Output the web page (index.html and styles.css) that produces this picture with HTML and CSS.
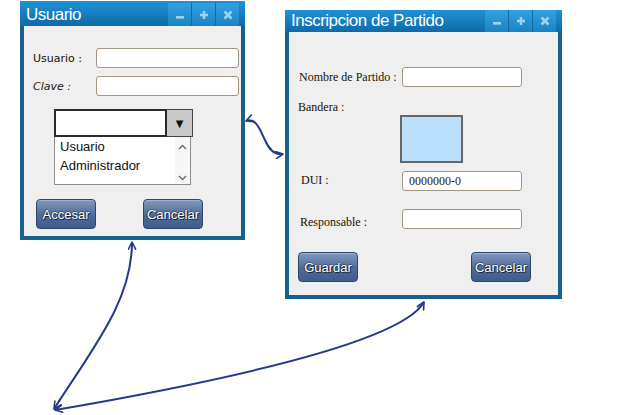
FILE: index.html
```html
<!DOCTYPE html>
<html lang="es">
<head>
<meta charset="utf-8">
<title>Usuario / Inscripcion de Partido</title>
<link rel="stylesheet" href="styles.css">
</head>
<body>
<div class="desk">

  <section class="win win-login">
    <header class="tbar tbar-tall">
      <span class="ttl">Usuario</span>
      <div class="tbtns">
        <span class="tb"><svg width="10" height="10" viewBox="0 0 10 10"><rect x="1" y="6" width="8" height="2.6" fill="#9fd0ee"/></svg></span>
        <span class="tb"><svg width="10" height="10" viewBox="0 0 10 10"><rect x="3.7" y="1" width="2.6" height="8" fill="#9fd0ee"/><rect x="1" y="3.7" width="8" height="2.6" fill="#9fd0ee"/></svg></span>
        <span class="tb"><svg width="10" height="10" viewBox="0 0 10 10"><path d="M1.5 1.5 L8.5 8.5 M8.5 1.5 L1.5 8.5" stroke="#9fd0ee" stroke-width="2.6"/></svg></span>
      </div>
    </header>
    <div class="wbody login-body">
      <div class="frow">
        <span class="lbl-c">Usuario :</span>
        <span class="inp inp-login"></span>
      </div>
      <div class="frow frow-2">
        <span class="lbl-c lbl-clave">Clave :</span>
        <span class="inp inp-login"></span>
      </div>
      <div class="combo">
        <div class="cb-head">
          <span class="cb-text"></span>
          <span class="cb-btn">&#9660;</span>
        </div>
        <div class="cb-list">
          <div class="cb-items">
            <div class="cb-item">Usuario</div>
            <div class="cb-item">Administrador</div>
          </div>
          <div class="cb-scroll">
            <svg width="9" height="6" viewBox="0 0 9 6"><path d="M1 5 L4.5 1.5 L8 5" fill="none" stroke="#666" stroke-width="1.3"/></svg>
            <svg width="9" height="6" viewBox="0 0 9 6"><path d="M1 1 L4.5 4.5 L8 1" fill="none" stroke="#666" stroke-width="1.3"/></svg>
          </div>
        </div>
      </div>
      <div class="brow brow-login">
        <span class="btn">Accesar</span>
        <span class="btn btn-cancel1">Cancelar</span>
      </div>
    </div>
  </section>

  <section class="win win-party">
    <header class="tbar">
      <span class="ttl">Inscripcion de Partido</span>
      <div class="tbtns">
        <span class="tb"><svg width="10" height="10" viewBox="0 0 10 10"><rect x="1" y="6" width="8" height="2.6" fill="#9fd0ee"/></svg></span>
        <span class="tb"><svg width="10" height="10" viewBox="0 0 10 10"><rect x="3.7" y="1" width="2.6" height="8" fill="#9fd0ee"/><rect x="1" y="3.7" width="8" height="2.6" fill="#9fd0ee"/></svg></span>
        <span class="tb"><svg width="10" height="10" viewBox="0 0 10 10"><path d="M1.5 1.5 L8.5 8.5 M8.5 1.5 L1.5 8.5" stroke="#9fd0ee" stroke-width="2.6"/></svg></span>
      </div>
    </header>
    <div class="wbody party-body">
      <div class="prow prow-1">
        <span class="lbl-s">Nombre de Partido :</span>
        <span class="inp inp-party"></span>
      </div>
      <div class="lbl-s lbl-bandera">Bandera :</div>
      <div class="flag"></div>
      <div class="prow prow-dui">
        <span class="lbl-s lbl-dui">DUI :</span>
        <span class="inp inp-party inp-val">0000000-0</span>
      </div>
      <div class="prow prow-resp">
        <span class="lbl-s lbl-resp">Responsable :</span>
        <span class="inp inp-party"></span>
      </div>
      <div class="brow brow-party">
        <span class="btn">Guardar</span>
        <span class="btn btn-cancel2">Cancelar</span>
      </div>
    </div>
  </section>

  <svg class="links" width="639" height="415" viewBox="0 0 639 415">
    <defs>
      <marker id="ah" viewBox="0 0 10 10" refX="9" refY="5" markerWidth="9" markerHeight="9" markerUnits="userSpaceOnUse" orient="auto-start-reverse">
        <path d="M1,1 L9,5 L1,9" fill="none" stroke="#25398a" stroke-width="1.8" stroke-linecap="round" stroke-linejoin="round"/>
      </marker>
    </defs>
    <path d="M246,121 C256,117 260,130 265,140 C270,152 276,155 283,154" fill="none" stroke="#25398a" stroke-width="2" marker-start="url(#ah)" marker-end="url(#ah)"/>
    <path d="M132,242 C132,300 95,345 54,409" fill="none" stroke="#25398a" stroke-width="2" marker-start="url(#ah)" marker-end="url(#ah)"/>
    <path d="M55,410 C200,385 400,345 424,302" fill="none" stroke="#25398a" stroke-width="2" marker-start="url(#ah)" marker-end="url(#ah)"/>
  </svg>
</div>
</body>
</html>
```

FILE: styles.css
```css
html, body {
  margin: 0;
  padding: 0;
  background: #ffffff;
}

.desk {
  position: relative;
  width: 639px;
  height: 415px;
  overflow: hidden;
  background: #ffffff;
}

/* windows on the desktop */
.win {
  position: absolute;
  box-sizing: border-box;
  display: flex;
  flex-direction: column;
  background: #17628c;
  padding: 0 4px 4px;
}

.win-login {
  left: 20px;
  top: 1px;
  width: 225px;
  height: 239px;
}

.win-party {
  left: 285px;
  top: 10px;
  width: 277px;
  height: 289px;
}

.tbar {
  display: flex;
  align-items: stretch;
  justify-content: space-between;
  height: 22px;
  margin: 0 -4px;
  background: linear-gradient(#1e92d8, #0f6aa6);
}

.tbar-tall {
  height: 25px;
}

.ttl {
  padding-left: 6px;
  color: #ffffff;
  font-family: "Liberation Sans", Arial, sans-serif;
  font-size: 17px;
  letter-spacing: -0.5px;
  line-height: 22px;
  white-space: nowrap;
}

.tbar-tall .ttl {
  line-height: 27px;
}

.tbtns {
  display: flex;
  padding: 2px 6px 0 0;
}

.tbar:not(.tbar-tall) .tbtns {
  padding-top: 0;
}

.tb {
  display: flex;
  align-items: center;
  justify-content: center;
  width: 23px;
  border-left: 1px solid #1468a2;
  background: linear-gradient(#33a2e2, #1a82c4);
}

.tb:first-child {
  border-left: 0;
}

.wbody {
  flex: 1;
  background: #efefef;
  display: flex;
  flex-direction: column;
}

/* login window */
.login-body {
  padding: 22px 0 0 9px;
}

.frow {
  display: flex;
  align-items: center;
  height: 20px;
}

.frow-2 {
  margin-top: 8px;
}

.lbl-c {
  width: 63px;
  color: #221404;
  font-family: "DejaVu Sans", sans-serif;
  font-size: 11px;
  padding-top: 1px;
}

.lbl-clave {
  font-style: italic;
}

.inp {
  box-sizing: border-box;
  display: block;
  height: 20px;
  background: #ffffff;
  border: 1px solid #a39583;
  border-radius: 3px;
}

.inp-login {
  width: 143px;
}

.combo {
  margin: 13px 0 0 21px;
  width: 139px;
}

.cb-head {
  display: flex;
  height: 28px;
}

.cb-text {
  flex: 1;
  box-sizing: border-box;
  background: #ffffff;
  border: 2px solid #2a2a2a;
}

.cb-btn {
  box-sizing: border-box;
  width: 26px;
  display: flex;
  align-items: center;
  justify-content: center;
  background: #c9c9c9;
  border: 1px solid #444444;
  border-left: 0;
  color: #111111;
  font-family: "DejaVu Sans", sans-serif;
  font-size: 10px;
}

.cb-list {
  box-sizing: border-box;
  display: flex;
  width: 137px;
  height: 48px;
  background: #ffffff;
  border: 1px solid #8c8c8c;
  border-top: 0;
}

.cb-items {
  flex: 1;
  padding: 0 0 0 5px;
  font-family: "Liberation Sans", Arial, sans-serif;
  font-size: 13px;
  line-height: 19px;
  color: #111111;
}

.cb-scroll {
  width: 15px;
  display: flex;
  flex-direction: column;
  justify-content: space-between;
  align-items: center;
  padding: 7px 0 3px;
  background: #f7f7f7;
}

.brow {
  display: flex;
}

.brow-login {
  margin: 14px 0 0 3px;
}

.btn {
  box-sizing: border-box;
  display: flex;
  align-items: center;
  justify-content: center;
  width: 60px;
  height: 30px;
  border: 1px solid #2e4468;
  border-radius: 4px;
  background: linear-gradient(#8299bd, #4d6a98 55%, #3f5d8e);
  box-shadow: inset 0 1px 0 rgba(255,255,255,0.25);
  color: #ffffff;
  font-family: "Liberation Sans", Arial, sans-serif;
  font-size: 13px;
  text-shadow: 1px 1px 0 #1a2538, -1px 0 0 rgba(20,30,50,0.6), 0 -1px 0 rgba(20,30,50,0.4);
}

.btn-cancel1 {
  margin-left: 47px;
}

/* party window */
.party-body {
  padding: 0 0 0 10px;
}

.prow {
  display: flex;
  align-items: center;
  height: 20px;
}

.prow-1 {
  margin-top: 35px;
}

.lbl-s {
  color: #1c1204;
  font-family: "Liberation Serif", "Times New Roman", serif;
  font-size: 12px;
}

.prow .lbl-s {
  width: 103px;
  box-sizing: border-box;
}

.lbl-bandera {
  margin: 13px 0 0 -1px;
  height: 14px;
  line-height: 14px;
}

.flag {
  box-sizing: border-box;
  width: 63px;
  height: 48px;
  margin: 1px 0 0 101px;
  background: #bbdefb;
  border: 2px solid #666666;
}

.inp-party {
  width: 120px;
}

.inp-val {
  padding-left: 6px;
  color: #2e2008;
  font-family: "Liberation Serif", "Times New Roman", serif;
  font-size: 12px;
  line-height: 18px;
}

.prow-dui {
  margin-top: 8px;
}

.lbl-dui {
  padding: 0 0 2px 2px;
}

.prow-resp {
  margin-top: 18px;
}

.lbl-resp {
  padding: 6px 0 0 1px;
}

.brow-party {
  margin: 23px 0 0 -1px;
}

.btn-cancel2 {
  margin-left: 113px;
}

/* connectors drawn over the canvas */
.links {
  position: absolute;
  left: 0;
  top: 0;
  pointer-events: none;
}
```
